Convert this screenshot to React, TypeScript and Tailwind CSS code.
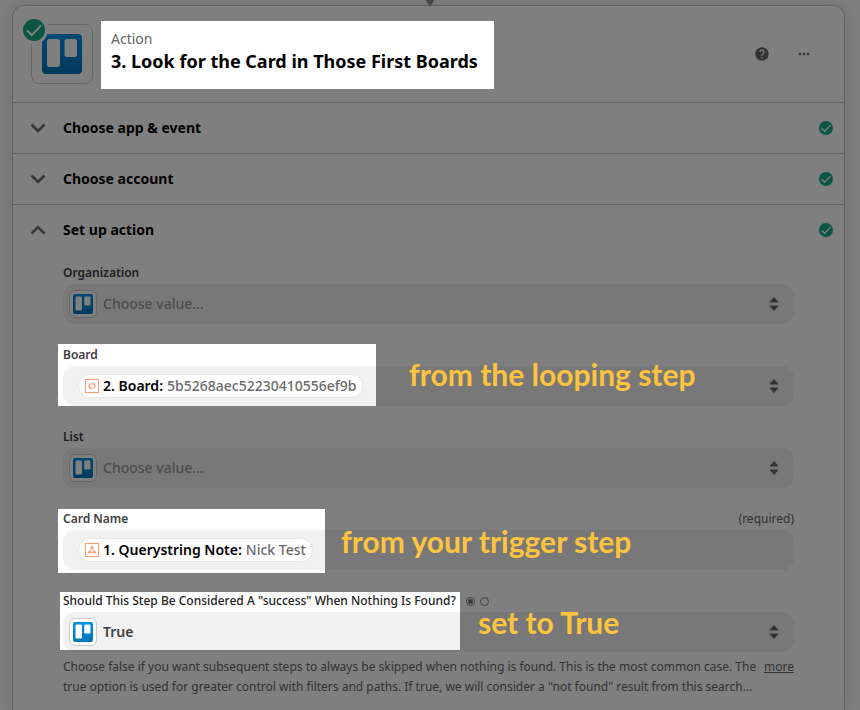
import React, { useId, useState } from "react";
import { MdHelp, MdMoreHoriz } from "react-icons/md";

interface Spotlight {
  x: number;
  y: number;
  width: number;
  height: number;
}

// Areas of the page that the dimming layer leaves bright
const SPOTLIGHTS: Spotlight[] = [
  { x: 101, y: 21, width: 393, height: 68 },
  { x: 58, y: 344, width: 318, height: 62 },
  { x: 58, y: 509, width: 267, height: 64 },
  { x: 60, y: 592, width: 400, height: 58 },
];

const TrelloLogo = ({ className }: { className: string }) => {
  const id = useId();
  return (
    <svg viewBox="0 0 40 40" className={className} aria-hidden="true">
      <defs>
        <linearGradient id={id} x1="0" y1="0" x2="0" y2="1">
          <stop offset="0" stopColor="#0091e6" />
          <stop offset="1" stopColor="#0075b8" />
        </linearGradient>
      </defs>
      <rect width="40" height="40" rx="4" fill={`url(#${id})`} />
      <rect x="5" y="5" width="13" height="28" rx="2.5" fill="#fff" />
      <rect x="22.5" y="5" width="12.5" height="18" rx="2.5" fill="#fff" />
    </svg>
  );
};

const AppIcon = () => (
  <span className="flex size-7 shrink-0 items-center justify-center rounded-md border border-[#cccccc] bg-white">
    <TrelloLogo className="size-5" />
  </span>
);

const CheckCircle = ({ className }: { className: string }) => (
  <svg viewBox="0 0 24 24" className={className} aria-hidden="true">
    <circle cx="12" cy="12" r="12" fill="#15ab87" />
    <path
      d="M4.4 12.4 9.6 17.6 19.8 7"
      fill="none"
      stroke="#fff"
      strokeWidth="2.2"
    />
  </svg>
);

const SortArrows = () => (
  <svg viewBox="0 0 10 16" className="h-4 w-2.5 shrink-0" aria-hidden="true">
    <path
      d="M5 1.5 9 6H1ZM5 14.5 9 10H1Z"
      fill="#666"
      stroke="#666"
      strokeLinejoin="round"
    />
  </svg>
);

const Chevron = ({ open }: { open: boolean }) => (
  <svg viewBox="0 0 16 10" className="h-2.5 w-4" aria-hidden="true">
    <path
      d={open ? "M1.5 8.5 8 2l6.5 6.5" : "M1.5 1.5 8 8l6.5-6.5"}
      fill="none"
      stroke="#6f6f6f"
      strokeWidth="2.6"
    />
  </svg>
);

const LoopIcon = () => (
  <svg viewBox="0 0 14 14" className="size-3.5 shrink-0" fill="none" stroke="#ff9e73">
    <rect x=".5" y=".5" width="13" height="13" />
    <path
      d="M5.6 4.6a2.7 2.7 0 0 0-.6 4.6h1.2M8.4 9.4a2.7 2.7 0 0 0 .6-4.6H7.8"
      strokeWidth="1.2"
    />
    <path d="M8.4 3v3.4L6.2 4.7ZM5.6 11V7.6l2.2 1.7Z" fill="#ff9e73" stroke="none" />
  </svg>
);

const WebhookIcon = () => (
  <svg viewBox="0 0 14 14" className="size-3.5 shrink-0" fill="none" stroke="#ff9e73">
    <rect x=".5" y=".5" width="13" height="13" />
    <path d="M7 4.4 4.5 9.2M7 4.4l2.5 4.8M4.5 9.4h5" strokeWidth="1" />
    <g fill="#ff9e73" stroke="none">
      <circle cx="7" cy="4.4" r="1.4" />
      <circle cx="4.3" cy="9.3" r="1.4" />
      <circle cx="9.7" cy="9.3" r="1.4" />
    </g>
  </svg>
);

const Pill = ({
  icon,
  name,
  value,
}: {
  icon: React.ReactNode;
  name: string;
  value: string;
}) => (
  <span className="flex h-6 items-center gap-1 rounded-full border border-[#e6e6e6] bg-white px-1.5 text-sm whitespace-nowrap">
    {icon}
    <span className="font-semibold text-black">{name}</span>
    <span className="font-medium text-[#6b6b6b]">{value}</span>
  </span>
);

const SectionHeader = ({
  title,
  open,
  onToggle,
}: {
  title: string;
  open: boolean;
  onToggle: () => void;
}) => (
  <h2>
    <button
      type="button"
      aria-expanded={open}
      onClick={onToggle}
      className="flex h-[50px] w-full items-center pr-[11px] pl-[17px] text-left"
    >
      <Chevron open={open} />
      <span className="ml-[17px] flex-1 text-sm font-bold text-black">
        {title}
      </span>
      <CheckCircle className="size-3.5" />
    </button>
  </h2>
);

const SelectField = ({
  id,
  label,
  options,
  className,
}: {
  id: string;
  label: string;
  options: string[];
  className: string;
}) => (
  <div>
    <label htmlFor={id} className="flex h-6 items-center pt-0.5 text-xs font-semibold text-[#404040]">
      {label}
    </label>
    <div className="flex h-10 items-center gap-1.5 rounded-xl bg-[#f1f1f1] pr-[15px] pl-1.5">
      <AppIcon />
      <select
        id={id}
        className={`min-w-0 flex-1 appearance-none bg-transparent text-sm font-medium ${className}`}
      >
        {options.map((option) => (
          <option key={option}>{option}</option>
        ))}
      </select>
      <SortArrows />
    </div>
  </div>
);

const Note = ({ className, children }: { className: string; children: string }) => (
  <p
    className={`absolute font-['Lato','Liberation_Sans',sans-serif] text-[30px] leading-9 font-bold whitespace-nowrap text-[#ffc43d] ${className}`}
  >
    {children}
  </p>
);

const DimLayer = () => {
  const holes = SPOTLIGHTS.map(({ x, y, width, height }) => {
    const right = x + width;
    const bottom = y + height;
    return `${x}px ${y}px, ${right}px ${y}px, ${right}px ${bottom}px, ${x}px ${bottom}px, ${x}px ${y}px, 0 0`;
  }).join(", ");

  return (
    <div
      className="pointer-events-none absolute inset-0 bg-black/50"
      style={{
        clipPath: `polygon(evenodd, 0 0, 100% 0, 100% 100%, 0 100%, 0 0, ${holes})`,
      }}
    />
  );
};

const App: React.FC = () => {
  const [eventOpen, setEventOpen] = useState(false);
  const [accountOpen, setAccountOpen] = useState(false);
  const [setupOpen, setSetupOpen] = useState(true);

  return (
    <div className="relative flex min-h-screen flex-col overflow-hidden bg-[#fcfcfc] pt-[5px] pr-[15px] pl-3 font-['Noto_Sans','Open_Sans',sans-serif]">
      <main className="flex-1 rounded-t-xl border border-b-0 border-[#c4c4c4] bg-white shadow-[0_0_16px_rgba(0,0,0,0.12)]">
        {/* Step header */}
        <header className="flex h-24 items-center pr-8 pl-[18px]">
          <div className="relative flex h-[60px] w-[62px] items-center justify-center rounded-lg border border-[#cccccc] bg-white">
            <TrelloLogo className="size-10" />
            <span className="absolute -top-[9px] -left-3 rounded-full bg-white p-[3px]">
              <CheckCircle className="size-[22px]" />
            </span>
          </div>
          <div className="ml-[18px] flex-1 pb-1.5">
            <p className="text-sm leading-5 text-[#666666]">Action</p>
            <h1 className="text-lg leading-6 font-bold text-black">
              3. Look for the Card in Those First Boards
            </h1>
          </div>
          <div className="flex items-center gap-[26px] text-[#666666]">
            <button type="button" aria-label="Help">
              <MdHelp className="size-4" />
            </button>
            <button type="button" aria-label="More options">
              <MdMoreHoriz className="size-4" />
            </button>
          </div>
        </header>

        <section className="border-t border-[#c4c4c4]">
          <SectionHeader
            title="Choose app & event"
            open={eventOpen}
            onToggle={() => setEventOpen(!eventOpen)}
          />
        </section>
        <section className="border-t border-[#c4c4c4]">
          <SectionHeader
            title="Choose account"
            open={accountOpen}
            onToggle={() => setAccountOpen(!accountOpen)}
          />
        </section>

        <section className="border-t border-[#c4c4c4]">
          <SectionHeader
            title="Set up action"
            open={setupOpen}
            onToggle={() => setSetupOpen(!setupOpen)}
          />
          {setupOpen && (
            <form className="flex flex-col gap-[18px] px-[50px] pt-[5px] pb-3">
              <SelectField
                id="organization"
                label="Organization"
                options={["Choose value…"]}
                className="text-[#999999]"
              />

              <div>
                <label htmlFor="board" className="flex h-6 items-center pt-0.5 text-xs font-semibold text-[#404040]">
                  Board
                </label>
                <button
                  id="board"
                  type="button"
                  aria-haspopup="listbox"
                  className="flex h-10 w-full items-center justify-between rounded-xl bg-[#f1f1f1] pr-[15px] pl-[15px]"
                >
                  <Pill
                    icon={<LoopIcon />}
                    name="2. Board:"
                    value="5b5268aec52230410556ef9b"
                  />
                  <SortArrows />
                </button>
              </div>

              <SelectField
                id="list"
                label="List"
                options={["Choose value…"]}
                className="text-[#999999]"
              />

              <div>
                <div className="flex h-6 items-center justify-between pt-0.5 text-xs">
                  <span id="card-name" className="font-semibold text-[#404040]">
                    Card Name
                  </span>
                  <span className="text-[#666666]">(required)</span>
                </div>
                <div
                  role="textbox"
                  tabIndex={0}
                  aria-labelledby="card-name"
                  className="flex h-10 items-center rounded-xl bg-[#f1f1f1] px-[15px]"
                >
                  <Pill
                    icon={<WebhookIcon />}
                    name="1. Querystring Note:"
                    value="Nick Test"
                  />
                </div>
              </div>

              <div>
                <div className="flex h-6 items-center pt-0.5 text-xs">
                  <label htmlFor="success" className="font-medium text-[#222222]">
                    Should This Step Be Considered A "success" When Nothing Is
                    Found?
                  </label>
                  <input
                    type="radio"
                    name="mode"
                    defaultChecked
                    aria-label="Choose from list"
                    className="ml-2.5 size-[9px] appearance-none rounded-full border border-[#777777] checked:bg-[#777777] checked:bg-clip-content checked:p-px"
                  />
                  <input
                    type="radio"
                    name="mode"
                    aria-label="Custom value"
                    className="ml-[5px] size-[9px] appearance-none rounded-full border border-[#777777] checked:bg-[#777777] checked:bg-clip-content checked:p-px"
                  />
                </div>
                <div className="flex h-10 items-center gap-1.5 rounded-xl bg-[#f1f1f1] pr-[15px] pl-1.5">
                  <AppIcon />
                  <select
                    id="success"
                    className="min-w-0 flex-1 appearance-none bg-transparent text-sm font-semibold text-[#404040]"
                  >
                    <option>True</option>
                    <option>False</option>
                  </select>
                  <SortArrows />
                </div>
                <div className="flex items-start justify-between gap-1 pt-[5px] text-xs leading-5 text-[#666666]">
                  <p>
                    Choose false if you want subsequent steps to always be
                    skipped when nothing is found. This is the most common case.
                    The true option is used for greater control with filters and
                    paths. If true, we will consider a "not found" result from
                    this search…
                  </p>
                  <a href="#more" className="underline">
                    more
                  </a>
                </div>
              </div>
            </form>
          )}
        </section>
      </main>

      {/* Tip of the connector coming from the previous step */}
      <svg
        viewBox="0 0 8 7"
        className="absolute top-0 left-1/2 h-[7px] w-2 -translate-x-1/2"
        aria-hidden="true"
      >
        <path d="M0 0h8L4 7Z" fill="#888" />
      </svg>

      <DimLayer />
      <Note className="top-[356px] left-[409px]">from the looping step</Note>
      <Note className="top-[523px] left-[341px]">from your trigger step</Note>
      <Note className="top-[604px] left-[478px]">set to True</Note>
    </div>
  );
};

export default App;
